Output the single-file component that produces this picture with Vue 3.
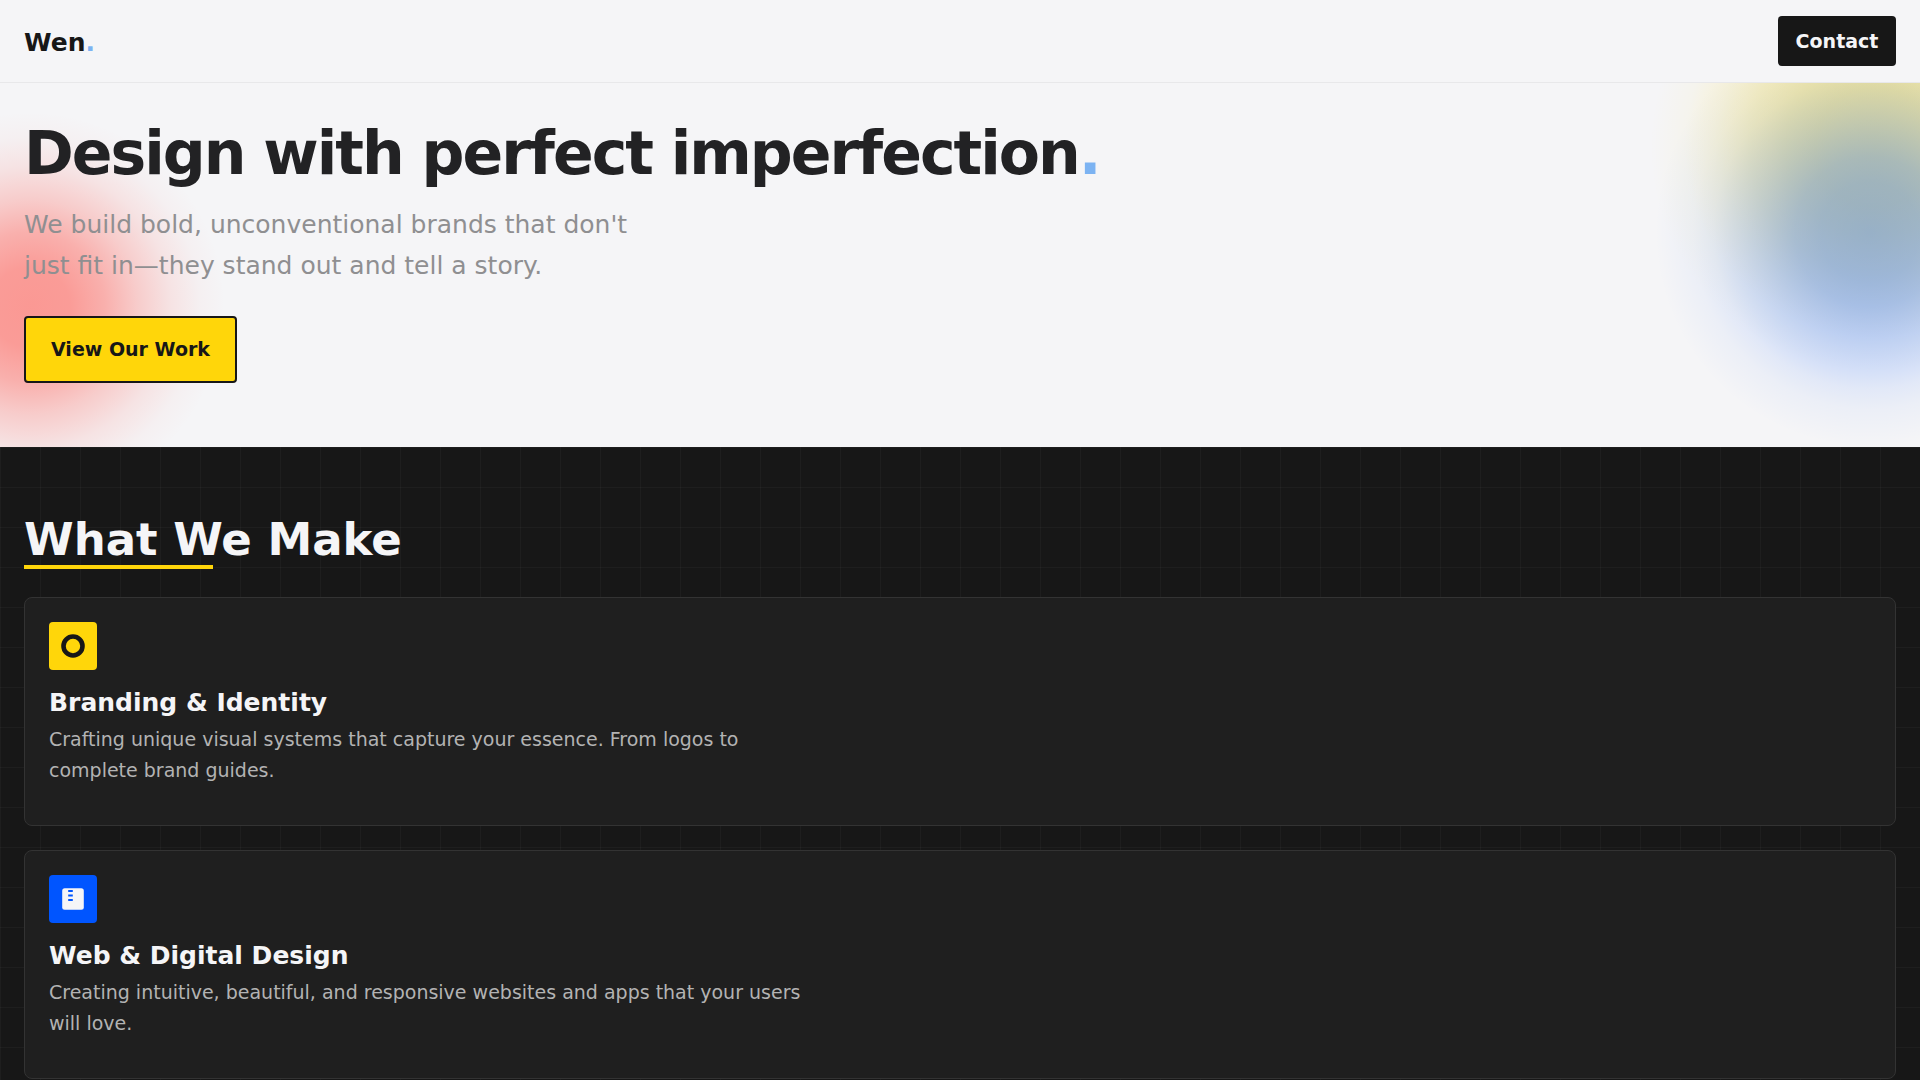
<script setup>
const services = [
  {
    id: 'branding',
    title: 'Branding & Identity',
    text: 'Crafting unique visual systems that capture your essence. From logos to complete brand guides.',
  },
  {
    id: 'web',
    title: 'Web & Digital Design',
    text: 'Creating intuitive, beautiful, and responsive websites and apps that your users will love.',
  },
]
</script>

<template>
  <div class="page">
    <header class="header">
      <a class="logo" href="#">Wen<span class="accent">.</span></a>
      <button class="contact" type="button">Contact</button>
    </header>

    <section class="hero">
      <h1>Design with perfect imperfection<span class="accent">.</span></h1>
      <p>We build bold, unconventional brands that don't just fit in—they stand out and tell a story.</p>
      <button class="cta" type="button">View Our Work</button>
    </section>

    <section class="services">
      <h2>What We Make</h2>
      <div class="cards">
        <article v-for="service in services" :key="service.id" class="card">
          <div class="icon" :class="service.id">
            <svg v-if="service.id === 'branding'" width="24" height="24" viewBox="0 0 24 24" aria-hidden="true">
              <circle cx="12" cy="12" r="9.5" fill="none" stroke="#171717" stroke-width="4.6" />
            </svg>
            <svg v-else width="24" height="24" viewBox="0 0 24 24" aria-hidden="true">
              <rect x="1.2" y="1.2" width="21.6" height="21.6" rx="2.5" fill="#f5f5f7" />
              <path d="M7.2 4h4.6M7.2 8.4h4.6M7.2 13h4.6" stroke="#0055ff" stroke-width="2" />
            </svg>
          </div>
          <h3>{{ service.title }}</h3>
          <p>{{ service.text }}</p>
        </article>
      </div>
    </section>
  </div>
</template>

<style>
body {
  margin: 0;
  background: #171717;
}
</style>

<style scoped>
.page {
  display: flex;
  flex-direction: column;
  min-height: 100vh;
  font-family: Verdana, "DejaVu Sans", sans-serif;
  font-size: 19px;
  color: #171717;
}

h1,
h2,
h3,
p {
  margin: 0;
}

button {
  font: inherit;
  font-weight: 700;
  border-radius: 4px;
  cursor: pointer;
}

.accent {
  color: #7cb3f2;
}

.header {
  display: flex;
  align-items: center;
  justify-content: space-between;
  padding: 16px 24px;
  background: #f5f5f7;
  border-bottom: 1px solid #e8e8ea;
}

.logo {
  padding-top: 2px;
  font-size: 25px;
  font-weight: 700;
  color: inherit;
  text-decoration: none;
}

.contact {
  width: 118px;
  height: 50px;
  padding: 0;
  border: 0;
  background: #171717;
  color: #f5f5f7;
}

.hero {
  padding: 32px 24px 64px;
  background:
    radial-gradient(circle 215px at calc(100% - 50px) 149px,
      rgba(0, 85, 255, 0.39) 0, rgba(0, 85, 255, 0.36) 50px, rgba(0, 85, 255, 0.32) 75px,
      rgba(0, 85, 255, 0.26) 97px, rgba(0, 85, 255, 0.2) 117px, rgba(0, 85, 255, 0.14) 137px,
      rgba(0, 85, 255, 0.08) 157px, rgba(0, 85, 255, 0.04) 177px, rgba(0, 85, 255, 0) 215px),
    radial-gradient(circle 225px at calc(100% - 45px) 64px,
      rgba(255, 214, 0, 0.4) 0, rgba(255, 214, 0, 0.38) 60px, rgba(255, 214, 0, 0.33) 90px,
      rgba(255, 214, 0, 0.24) 125px, rgba(255, 214, 0, 0.12) 160px, rgba(255, 214, 0, 0.04) 190px,
      rgba(255, 214, 0, 0) 225px),
    radial-gradient(circle 195px at 30px 224px,
      rgba(255, 80, 70, 0.56) 0, rgba(255, 80, 70, 0.54) 40px, rgba(255, 80, 70, 0.42) 75px,
      rgba(255, 80, 70, 0.25) 107px, rgba(255, 80, 70, 0.11) 141px, rgba(255, 80, 70, 0.03) 170px,
      rgba(255, 80, 70, 0) 195px),
    #f5f5f7;
}

.hero h1 {
  font-size: 60px;
  line-height: 76px;
  letter-spacing: -2px;
  color: #222224;
}

.hero p {
  max-width: 640px;
  margin-top: 13px;
  font-size: 25px;
  line-height: 41px;
  color: #8f8f91;
}

.cta {
  display: block;
  height: 67px;
  margin-top: 30px;
  padding: 0 25px 2px;
  border: 2px solid #171717;
  background: #ffd60a;
  color: #171717;
}

.services {
  flex: 1;
  padding: 64px 24px 0;
  background:
    linear-gradient(rgba(255, 255, 255, 0.03) 1px, transparent 1px) 0 0 / 40px 40px,
    linear-gradient(90deg, rgba(255, 255, 255, 0.03) 1px, transparent 1px) 0 0 / 40px 40px,
    #171717;
  color: #f5f5f7;
}

.services h2 {
  position: relative;
  width: fit-content;
  font-size: 45px;
  line-height: 58px;
}

.services h2::after {
  content: "";
  position: absolute;
  left: 0;
  bottom: 0;
  width: 50%;
  height: 4px;
  background: #ffd60a;
}

.cards {
  display: flex;
  flex-direction: column;
  gap: 24px;
  margin-top: 28px;
}

.card {
  padding: 24px 24px 39px;
  background: #1f1f1f;
  border: 1px solid #333;
  border-radius: 8px;
}

.icon {
  display: flex;
  align-items: center;
  justify-content: center;
  width: 48px;
  height: 48px;
  border-radius: 4px;
}

.icon.branding {
  background: #ffd60a;
}

.icon.web {
  background: #0055ff;
}

.card h3 {
  margin-top: 13px;
  font-size: 25px;
  line-height: 40px;
}

.card p {
  max-width: 768px;
  margin-top: 1px;
  line-height: 31px;
  color: #b3b3b3;
}
</style>
